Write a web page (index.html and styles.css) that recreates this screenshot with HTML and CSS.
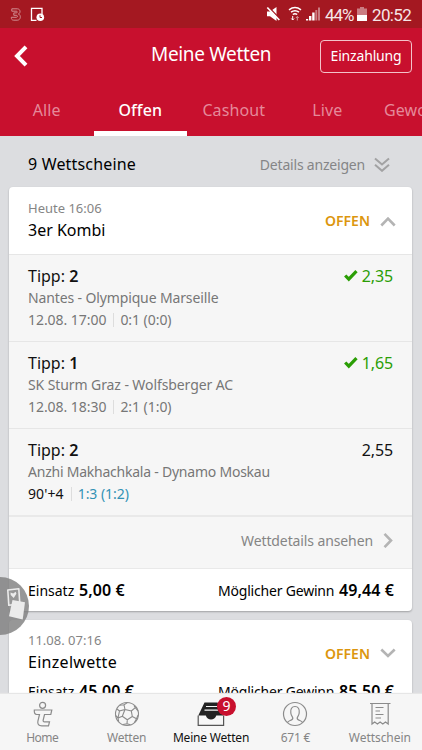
FILE: index.html
```html
<!DOCTYPE html>
<html lang="de">
<head>
<meta charset="utf-8">
<title>Meine Wetten</title>
<link rel="stylesheet" href="styles.css">
</head>
<body>
<div class="app">
  <div class="status">
    <svg class="status-left" width="50" height="28" viewBox="0 0 50 28" fill="none">
      <path d="M11.8 8.800h5.6c3 0 3.600 4.300 1 5.200c2.900.9 2.600 6.200-1.200 6.200h-3.400c-2 0-2.500-1.200-2.500-2.900h5c1.600 0 1.600-2 0-2h-2.500v-2.400h2.500c1.400 0 1.400-1.700 0-1.700h-4.500z" stroke="#d08c90" stroke-width="1"/>
      <path d="M36.500 20.300h-5v-12h10.500v6" stroke="#fff" stroke-width="1.300"/>
      <circle cx="40.300" cy="17.300" r="3.800" fill="#fff"/>
      <path d="M40 15.200v2.300h2" stroke="#a41821" stroke-width="1"/>
    </svg>
    <div class="status-right">
      <svg width="56" height="28" viewBox="264 0 56 28" fill="none">
        <path d="M267 11.500h3l6.500-4.500v14l-6.500-4.800h-3z" fill="#fff"/>
        <path d="M268.500 7l13 13.500" stroke="#a41821" stroke-width="1.500"/>
        <path d="M267.300 7.500l12 12.500" stroke="#fff" stroke-width="1.700"/>
        <path d="M289 9.800q6-4.500 12 0M291 12.200q4-3 8 0M292.800 14.500q2.200-1.600 4.400 0" stroke="#fff" stroke-width="1.500"/>
        <path d="M292.700 16v4m-1.400-1.500l1.400 1.500l1.400-1.500" stroke="#fff"/>
        <path d="M297.300 20.500v-4m-1.400 1.500l1.400-1.500l1.400 1.500" stroke="#d99a9e"/>
        <path d="M306 20.500v-1.500h2.200v1.500zM309 20.500v-4.500h2.400v4.500zM312.200 20.500v-8h2.400v8z" fill="#fff"/>
        <path d="M315.300 20.500v-10.500h2v10.500zM318 20.500v-13h2v13z" fill="#ca7c82"/>
      </svg>
      <span class="percent">44%</span>
      <svg width="10" height="28" viewBox="0 0 10 28">
        <path d="M3 7h4v1.500h3v6.500h-10v-6.500h3z" fill="#ca7c82"/>
        <path d="M0 15h10v6h-10z" fill="#fff"/>
      </svg>
      <span class="clock">20:52</span>
    </div>
  </div>

  <header class="header">
    <div class="titlebar">
      <svg width="16" height="22" viewBox="0 0 16 22" fill="none"><path d="M13 1.800l-9 9.200l9 9.200" stroke="#fff" stroke-width="4"/></svg>
      <h1 class="title">Meine Wetten</h1>
      <button class="deposit">Einzahlung</button>
    </div>
    <nav class="tabs">
      <span class="tab">Alle</span>
      <span class="tab active">Offen</span>
      <span class="tab cashout">Cashout</span>
      <span class="tab">Live</span>
      <span class="tab last">Gewonnen</span>
    </nav>
  </header>

  <main class="content">
    <div class="summary">
      <span class="count">9 Wettscheine</span>
      <span class="toggle">Details anzeigen
        <svg width="16" height="16" viewBox="0 0 16 16" fill="none"><path d="M1 2.500l7 6l7-6M1 8.800l7 6l7-6" stroke="#a2a2a3" stroke-width="2"/></svg>
      </span>
    </div>

    <section class="card">
      <div class="card-head">
        <div><div class="date">Heute 16:06</div><div class="kind">3er Kombi</div></div>
        <div class="state">OFFEN<svg width="16" height="12" viewBox="0 0 16 12" fill="none"><path d="M1.300 10.500l6.700-6.800l6.700 6.800" stroke="#b4b4b4" stroke-width="2.600"/></svg></div>
      </div>
      <div class="tip">
        <div class="tip-top"><span>Tipp: <b>2</b></span><span class="odds won"><svg width="14" height="12" viewBox="0 0 14 12" fill="none"><path d="M1.200 5.500l3.600 3.700l7.700-8" stroke="#2b9e05" stroke-width="3.200"/></svg>2,35</span></div>
        <div class="match">Nantes - Olympique Marseille</div>
        <div class="info"><span>12.08. 17:00</span><span class="score">0:1 (0:0)</span></div>
      </div>
      <div class="tip">
        <div class="tip-top"><span>Tipp: <b>1</b></span><span class="odds won"><svg width="14" height="12" viewBox="0 0 14 12" fill="none"><path d="M1.200 5.500l3.600 3.700l7.700-8" stroke="#2b9e05" stroke-width="3.200"/></svg>1,65</span></div>
        <div class="match second">SK Sturm Graz - Wolfsberger AC</div>
        <div class="info"><span>12.08. 18:30</span><span class="score">2:1 (1:0)</span></div>
      </div>
      <div class="tip">
        <div class="tip-top"><span>Tipp: <b>2</b></span><span class="odds">2,55</span></div>
        <div class="match third">Anzhi Makhachkala - Dynamo Moskau</div>
        <div class="info live"><span class="minute">90'+4</span><span class="score">1:3 (1:2)</span></div>
      </div>
      <div class="details">Wettdetails ansehen<svg width="10" height="16" viewBox="0 0 10 16" fill="none"><path d="M1.500 1.800l6.500 6.700l-6.500 6.700" stroke="#b4b4b4" stroke-width="2.600"/></svg></div>
      <div class="totals">
        <div>Einsatz <b>5,00 €</b></div>
        <div><span class="win">Möglicher Gewinn</span> <b>49,44 €</b></div>
      </div>
    </section>

    <section class="card">
      <div class="card-head closed">
        <div><div class="date">11.08. 07:16</div><div class="kind single">Einzelwette</div></div>
        <div class="state">OFFEN<svg width="16" height="12" viewBox="0 0 16 12" fill="none"><path d="M1.300 2.500l6.700 6.500l6.700-6.500" stroke="#b4b4b4" stroke-width="2.600"/></svg></div>
      </div>
      <div class="totals closed-totals">
        <div>Einsatz <b>45,00 €</b></div>
        <div><span class="win">Möglicher Gewinn</span> <b>85,50 €</b></div>
      </div>
    </section>
  </main>

  <nav class="bottom">
    <a class="item">
      <svg width="28" height="28" viewBox="0 0 28 28" fill="none" stroke="#8b8b8b" stroke-width="1.200"><circle cx="14.600" cy="5.300" r="3"/><path d="M6.300 10h17.500l-1 4.500h-6.300l-1.300 5.500c-.3 1.300.2 1.800 1.300 1.800h5l-1 4h-6.700c-3.200 0-4.500-1.800-3.900-4.600l1.600-6.700h-2.800c-1.800 0-2.600-1.500-2.400-4.500z"/></svg>
      <span class="home">Home</span>
    </a>
    <a class="item">
      <svg width="28" height="28" viewBox="0 0 28 28" fill="none" stroke="#8b8b8b" stroke-width="1.100"><circle cx="14" cy="14" r="11.500"/><path d="M12 9.500l6.300 1.500l1 5.500l-5 3.300l-5-3.500zM12 9.500l-1-4.700l3.500-2.200M11 4.800l-4.500.5M18.300 11l4-3.300l-1.300-2.200M22.300 7.700l2.900 3.500M19.300 16.500l4.200 2.200l1.600-3.700M23.500 18.700l-2.200 4M14.300 19.800l-.3 4l-4 .7M14 23.800l3.500 1M9.300 16.300l-4.300 1.700l-2.400-2.500M5 18l.7 3.500M12 9.500l-5.500 1.500l-1.500 7M4 9l2.500 2"/></svg>
      <span>Wetten</span>
    </a>
    <a class="item current">
      <span class="tray">
        <svg width="28" height="28" viewBox="0 0 28 28" fill="none"><path d="M7.500 2.500h13l6 13h-7.200c-.8 2.900-3 4-5.300 4s-4.400-1.100-5.200-4h-7.500z" fill="#222"/><path d="M9 6.500h11.500M7.500 10.200h13.500" stroke="#f6f6f6" stroke-width="1.200"/><path d="M1.200 15.500v9.900h25.400v-9.900" stroke="#555" stroke-width="1.200"/></svg>
        <span class="badge">9</span>
      </span>
      <span>Meine Wetten</span>
    </a>
    <a class="item">
      <svg width="28" height="28" viewBox="0 0 28 28" fill="none" stroke="#8b8b8b" stroke-width="1.200"><circle cx="14" cy="14" r="11.500"/><path d="M6.500 22.500c.5-2.200 5.700-2 5.300-4.500c-.1-1-1.600-2.200-2-5c-.5-4 1-6.500 4.200-6.500s4.700 2.500 4.200 6.500c-.4 2.800-1.900 4-2 5c-.4 2.500 4.800 2.300 5.300 4.500"/></svg>
      <span class="balance">671 €</span>
    </a>
    <a class="item">
      <svg width="28" height="28" viewBox="0 0 28 28" fill="none" stroke="#8b8b8b" stroke-width="1.200"><path d="M4 3.500h20.500M6 3.500v20.500l2.700-2l2.700 2l2.700-2l2.700 2l2.700-2l2.700 2v-20.500M9.500 7.500h8M9.500 11h4.500M9.500 14.500h8M9.500 18h5.500"/></svg>
      <span class="slip">Wettschein</span>
    </a>
  </nav>

  <div class="bubble">
    <svg width="29" height="58" viewBox="0 0 29 58" fill="none">
      <path d="M7.800 13l11-1.300l1 15.300l-11 1.300z" stroke="#ebebeb" stroke-width="1.600" stroke-linejoin="round"/>
      <path d="M10.500 15.500l2.700 1l2.500-1.700l.7 2l-2.700 4.200l-3-3z" fill="#ebebeb"/>
      <path d="M12.500 23l12.500 2.200l-2.300 17.300l-13.700-3.200z" fill="#ebebeb"/>
    </svg>
  </div>
</div>
</body>
</html>
```
FILE: styles.css
```css
* { box-sizing: border-box; }
body { margin: 0; font-family: "Noto Sans", "Open Sans", sans-serif; color: #111; }
b { font-weight: 600; }
svg { display: block; flex: none; }

.app { position: relative; display: flex; flex-direction: column; width: 422px; height: 750px; overflow: hidden; background: #dcdde0; }

.status { display: flex; justify-content: space-between; height: 28px; flex: none; background: #a41821; }
.status-right { display: flex; align-items: center; padding-right: 10px; color: #f6e6e7; font: 17px/28px Roboto, sans-serif; }
.percent { width: 28px; margin: 1px 4px 0 5px; letter-spacing: -1.1px; }
.clock { width: 40px; margin: 1px 0 0 5px; letter-spacing: -0.65px; }

.header { flex: none; height: 108px; background: #c8102e; color: #fff; }
.titlebar { display: flex; align-items: center; height: 56px; padding: 0 10px 0 13px; }
.title { margin: 0 0 4px 122px; font-size: 19px; font-weight: 400; letter-spacing: -0.35px; line-height: 26px; }
.deposit { width: 92px; height: 33px; margin-left: auto; padding: 0 0 2px; border: 1px solid #f3c3ca; border-radius: 4px; background: none; color: #fff; font: 14px "Noto Sans", sans-serif; letter-spacing: -0.17px; }
.tabs { display: flex; height: 52px; overflow: hidden; }
.tab { flex: 0 0 93.500px; text-align: center; padding-top: 1px; font-size: 16px; line-height: 50px; letter-spacing: 0.1px; color: #e5899a; }
.tab.active { border-bottom: 5px solid #fff; color: #fff; font-weight: 500; }
.tab.last { text-align: left; padding-left: 10px; }

.content { flex: 1; min-height: 0; overflow: hidden; padding: 0 10px 0 9px; }
.summary { display: flex; justify-content: space-between; align-items: center; height: 51px; padding: 5px 22px 0 19px; }
.count { font-size: 16px; letter-spacing: 0.17px; color: #000; }
.toggle { display: flex; align-items: center; gap: 9px; font-size: 14px; letter-spacing: -0.2px; color: #858587; }

.card { margin-bottom: 9px; border-radius: 4px; background: #fff; box-shadow: 0 1px 2px rgba(0, 0, 0, .28); overflow: hidden; }
.card-head { display: flex; justify-content: space-between; align-items: center; height: 67px; padding: 0 16px 2px 19px; }
.date { font-size: 13px; line-height: 20px; color: #858585; }
.kind { font-size: 16px; line-height: 24px; color: #000; }
.single { letter-spacing: 0.29px; }
.state { display: flex; align-items: center; gap: 10px; padding-top: 2px; font-size: 14px; font-weight: 600; color: #dc960e; }
.tip { height: 87px; padding: 10px 19px 0; border-top: 1px solid #e6e6e6; background: #f6f6f6; }
.tip-top { display: flex; justify-content: space-between; font-size: 16px; line-height: 22px; }
.odds { display: flex; align-items: center; gap: 4px; letter-spacing: -0.15px; }
.won { color: #2b9e05; }
.match { font-size: 14px; line-height: 22px; letter-spacing: -0.13px; color: #777; }
.second { letter-spacing: -0.09px; }
.third { letter-spacing: -0.23px; }
.info { display: flex; font-size: 14px; line-height: 21px; letter-spacing: -0.05px; color: #777; }
.score { display: flex; align-items: center; }
.score::before { content: ""; width: 1px; height: 14px; margin: 0 6px 0 7px; background: #ddd; }
.live { color: #111; }
.minute { letter-spacing: 0.1px; }
.live .score { color: #3292b5; }
.details { display: flex; align-items: center; justify-content: flex-end; gap: 10px; height: 53px; padding: 0 19px 5px; border-top: 2px solid #e9e9e9; background: #f6f6f6; font-size: 14px; letter-spacing: -0.11px; color: #858585; }
.totals { display: flex; justify-content: space-between; align-items: center; height: 43px; padding: 0 18px 1px 19px; border-top: 1px solid #e9e9e9; font-size: 14px; color: #000; }
.totals b { margin-left: 1px; font-size: 16px; letter-spacing: 0.1px; }
.win { letter-spacing: -0.2px; }
.closed { padding-bottom: 3px; }
.closed-totals { border-top: 0; align-items: flex-start; margin-top: -7px; }

.bottom { display: flex; flex: none; height: 56px; background: #f6f6f6; box-shadow: 0 -1px 1px #e6e6e6; z-index: 1; }
.item { flex: 1; display: flex; flex-direction: column; align-items: center; padding-top: 6px; font-size: 12px; line-height: 18px; letter-spacing: -0.2px; color: #858585; }
.item > span:last-child { margin-top: 1px; white-space: nowrap; }
.current { color: #111; }
.slip { letter-spacing: -0.06px; }
.home { letter-spacing: -0.5px; }
.tray { position: relative; }
.badge { position: absolute; left: 20px; top: -3px; width: 19px; height: 19px; border-radius: 50%; background: #c8102e; color: #fff; font-size: 14px; line-height: 18px; text-align: center; letter-spacing: 0; }

.bubble { position: absolute; left: 0; top: 577px; width: 29px; height: 58px; border-radius: 0 29px 29px 0; background: rgba(125, 125, 125, .8); }
```
